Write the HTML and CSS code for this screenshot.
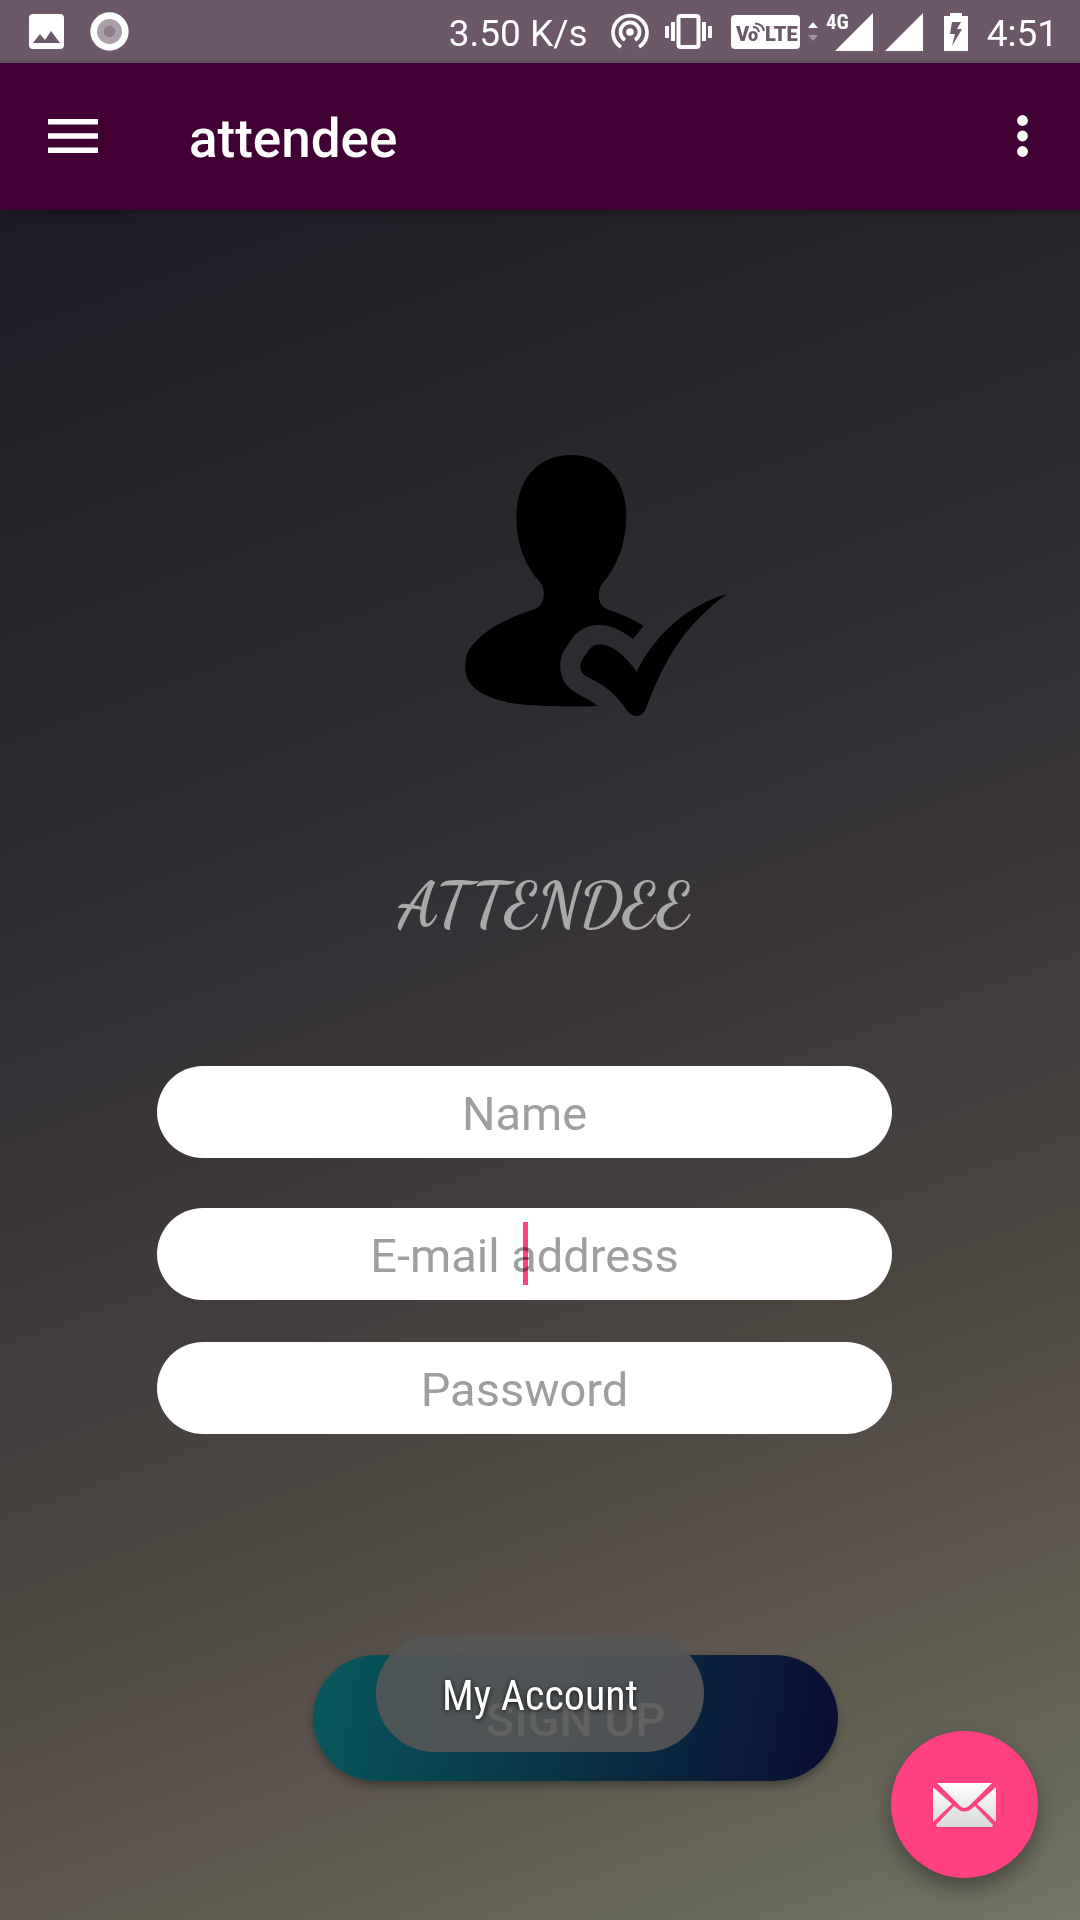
FILE: index.html
```html
<!DOCTYPE html>
<html lang="en">
<head>
<meta charset="utf-8">
<meta name="viewport" content="width=device-width, initial-scale=1">
<title>attendee</title>
<link rel="stylesheet" href="styles.css">
</head>
<body class="screen">
<div class="status-bar">
  <div class="status-notifications">
    <svg width="35" height="35" viewBox="0 0 35 35" aria-hidden="true"><path fill="#fff" fill-rule="evenodd" d="M4 0H31Q35 0 35 4V31Q35 35 31 35H4Q0 35 0 31V4Q0 0 4 0ZM4 29H31L22 17L16 26L11 20Z"/></svg>
    <svg width="39" height="39" viewBox="0 0 39 39" aria-hidden="true"><circle cx="19.500" cy="19.500" r="19.200" fill="#fff"/><circle cx="19.500" cy="19.500" r="12.500" fill="#ab9fa9"/><circle cx="19.500" cy="19.500" r="5.800" fill="#8e7d8b"/></svg>
  </div>
  <div class="status-system">
    <span class="status-text speed">3.50 K/s</span>
    <svg class="hotspot" width="38" height="37" viewBox="0 0 38 37" fill="none" stroke="#fff" stroke-width="3.700" aria-hidden="true"><path d="M10 34A17 17 0 1 1 28 34M14 27A9.500 9.500 0 1 1 24 27"/><circle cx="19" cy="19" r="3.800" fill="#fff" stroke="none"/></svg>
    <svg class="vibrate" width="47" height="35" viewBox="0 0 47 35" aria-hidden="true"><rect x="13.500" y="2" width="20" height="31" rx="2" fill="none" stroke="#fff" stroke-width="4"/><path fill="#fff" d="M0 12h4v12H0zM6 8h4v19H6zM37 8h4v19h-4zM43 12h4v12h-4z"/></svg>
    <svg class="volte" width="69" height="34" viewBox="0 0 69 34" aria-label="VoLTE"><rect width="69" height="34" rx="4" fill="#fff"/><text class="volte-text" y="26"><tspan x="5" font-size="20">V</tspan><tspan x="17" font-size="18">o</tspan><tspan x="34" font-size="20">LTE</tspan></text><path d="M22 12Q27 12 28 17M24 8.500Q32 9 33 16" fill="none" stroke="#6c5868" stroke-width="2"/></svg>
    <svg class="traffic" width="10" height="19" viewBox="0 0 10 19" aria-hidden="true"><path d="M0 6L5 0L10 6Z" fill="#fff"/><path d="M0 13H10L5 19Z" fill="#a497a2"/></svg>
    <svg class="signal-network" width="47" height="38" viewBox="0 0 47 38" aria-label="4G"><path d="M47 0V38H9Z" fill="#fff"/><text class="network-text" x="0" y="16">4G</text></svg>
    <svg class="signal" width="38" height="38" viewBox="0 0 38 38" aria-hidden="true"><path d="M38 0V38H0Z" fill="#fff"/></svg>
    <svg class="battery" width="24" height="38" viewBox="0 0 24 38" aria-hidden="true"><path fill="#fff" fill-rule="evenodd" d="M6 0H18V3H24V38H0V3H6ZM8 9L6 21H11L8 33L18 16H13L17 9Z"/></svg>
    <span class="status-text">4:51</span>
  </div>
</div>
<header class="app-bar">
  <button class="icon-button" type="button" aria-label="Open menu"><svg width="50" height="34" viewBox="0 0 50 34" fill="#fff"><path d="M0 0H50V5.500H0ZM0 14.200H50V19.700H0ZM0 28.500H50V34H0Z"/></svg></button>
  <h2 class="app-title">attendee</h2>
  <button class="icon-button" type="button" aria-label="More options"><svg width="11" height="44" viewBox="0 0 11 44" fill="#fff"><circle cx="5.500" cy="6.500" r="5.400"/><circle cx="5.500" cy="22" r="5.400"/><circle cx="5.500" cy="37.500" r="5.400"/></svg></button>
</header>
<main class="content">
  <svg class="logo" viewBox="0 0 930 930" aria-hidden="true">
    <path d="M395 75C500 77 560 155 559 260C558 340 532 410 484 464C475 482 474 502 480 516C484 528 493 535 505 539C543 552 578 566 611 587L579 627C541 599 511 585 477 585C440 585 412 602 393 630L373 660C354 691 358 737 378 763C402 795 439 800 473 828C390 832 300 829 240 823C158 813 77 783 76 715C75 675 85 656 112 629C157 585 220 558 285 537C312 525 317 492 306 464C254 408 229 342 229 265C229 150 290 75 395 75Z"/>
    <path d="M861 491C740 527 643 616 590 725C553 675 516 643 478 643C462 644 453 651 443 665L427 688C416 708 420 731 441 740C492 764 526 792 550 826C562 843 569 857 589 858C607 858 614 845 623 822C677 681 736 584 861 491Z"/>
  </svg>
  <h1 class="brand">ATTENDEE</h1>
  <form class="signup-form">
    <div class="fields">
      <input class="field field-name" type="text" placeholder="Name" aria-label="Name">
      <div class="email-wrap">
        <input class="field" type="email" placeholder="E-mail address" aria-label="E-mail address">
        <span class="caret"></span>
      </div>
      <input class="field" type="password" placeholder="Password" aria-label="Password">
    </div>
    <button class="signup" type="button">SIGN UP</button>
  </form>
</main>
<div class="toast" role="status">My Account</div>
<button class="fab" type="button" aria-label="Send e-mail">
  <svg width="63" height="44" viewBox="0 0 63 44" aria-hidden="true">
    <defs><linearGradient id="paper" x1="0" y1="0" x2="0" y2="44" gradientUnits="userSpaceOnUse"><stop offset="0" stop-color="#fff"/><stop offset="1" stop-color="#d8d8d8"/></linearGradient></defs>
    <path fill="url(#paper)" d="M4 0H59L36 23Q31 27 27 23ZM0 4L19 21L0 39ZM63 4V39L44 21ZM21 23L26 27Q31 30 37 27L42 23L60 42L59 44H4L3 42Z"/>
  </svg>
</button>
</body>
</html>
```
FILE: styles.css
```css
* {
  box-sizing: border-box;
}

.screen {
  margin: 0;
  min-height: 100vh;
  display: flex;
  flex-direction: column;
  font-family: Roboto, "Liberation Sans", sans-serif;
  background: #252428;
}

button {
  border: 0;
  padding: 0;
  font-family: inherit;
}

svg {
  display: block;
  flex: none;
  overflow: visible;
}

.status-bar {
  display: flex;
  justify-content: space-between;
  align-items: center;
  height: 63px;
  padding: 0 22px 0 29px;
  background: #6c5868;
}

.status-notifications {
  display: flex;
  align-items: center;
  gap: 26px;
}

.status-system {
  display: flex;
  align-items: center;
}

.status-text {
  color: #fff;
  font-size: 37px;
  line-height: 44px;
  padding-top: 4px;
}

.speed {
  margin-right: 23px;
}

.hotspot {
  margin-right: 16px;
}

.vibrate {
  margin-right: 19px;
}

.volte,
.traffic {
  margin-right: 8px;
}

.volte-text {
  fill: #6c5868;
  font-weight: 900;
}

.network-text {
  fill: #fff;
  font-family: "Roboto Condensed", Roboto, sans-serif;
  font-size: 21px;
  font-weight: 700;
}

.signal-network {
  margin-right: 12px;
}

.signal {
  margin-right: 21px;
}

.battery {
  margin-right: 19px;
}

.app-bar {
  display: flex;
  align-items: center;
  height: 147px;
  padding: 0 52px 2px 48px;
  background: #400033;
  box-shadow: 0 2px 8px rgba(0, 0, 0, 0.4);
  position: relative;
}

.icon-button {
  background: none;
}

.app-title {
  flex: 1;
  margin: 0;
  padding: 6px 0 0 91px;
  color: #fff;
  font-size: 53px;
  line-height: 60px;
  font-weight: 500;
}

.content {
  flex: 1;
  display: flex;
  flex-direction: column;
  padding: 220px 0 139px;
  background: linear-gradient(160deg, #1e1b28 0%, #212027 9%, #26252a 18%, #2e2c32 33%, #343337 42%, #3c3537 48%, #443e3f 58%, #4b4540 66%, #544d48 74%, #5c534e 79%, #5f5b4e 84%, #67675a 92%, #757666 100%);
}

.logo {
  width: 310px;
  height: 310px;
  margin-left: 110px;
  align-self: center;
}

.brand {
  margin: 120px 0 0;
  padding-left: 8px;
  text-align: center;
  color: #a9a9a9;
  font-family: "Dancing Script", "Liberation Serif", serif;
  font-size: 63px;
  line-height: 90px;
  font-weight: 700;
}

.signup-form {
  display: flex;
  flex-direction: column;
  margin-top: 116px;
}

.fields {
  display: flex;
  flex-direction: column;
  gap: 42px;
  margin: 0 188px 0 157px;
}

.field {
  display: block;
  width: 100%;
  height: 92px;
  border: 0;
  border-radius: 46px;
  padding: 2px 46px 0;
  background: #fff;
  color: #212121;
  font-family: inherit;
  font-size: 47px;
  text-align: center;
  outline: none;
}

.field-name {
  margin-bottom: 8px;
}

.field::placeholder {
  color: #9e9e9e;
  opacity: 1;
}

.email-wrap {
  position: relative;
}

.caret {
  position: absolute;
  left: 50%;
  top: 14px;
  width: 5px;
  height: 63px;
  margin-left: -2px;
  background: #ff4081;
  mix-blend-mode: multiply;
}

.signup {
  height: 126px;
  margin: 221px 242px 0 313px;
  padding-top: 3px;
  border-radius: 63px;
  background: linear-gradient(100deg, #08585c 0%, #0a3246 50%, #0a0d31 100%);
  box-shadow: 0 5px 8px rgba(0, 0, 0, 0.3);
  color: #c8c8c8;
  font-size: 47px;
  font-weight: 500;
}

.toast {
  position: fixed;
  left: 50%;
  bottom: 168px;
  transform: translateX(-50%);
  padding: 31px 66px 26px;
  border-radius: 59px;
  background: rgba(86, 86, 86, 0.9);
  color: #fff;
  font-family: "Roboto Condensed", Roboto, sans-serif;
  font-size: 42px;
  line-height: 60px;
  white-space: nowrap;
  text-shadow: 0 1px 5px rgba(0, 0, 0, 0.8);
}

.fab {
  position: fixed;
  right: 42px;
  bottom: 42px;
  width: 147px;
  height: 147px;
  display: flex;
  align-items: center;
  justify-content: center;
  border-radius: 50%;
  background: #ff4081;
  box-shadow: 0 10px 20px rgba(0, 0, 0, 0.35);
}
```
